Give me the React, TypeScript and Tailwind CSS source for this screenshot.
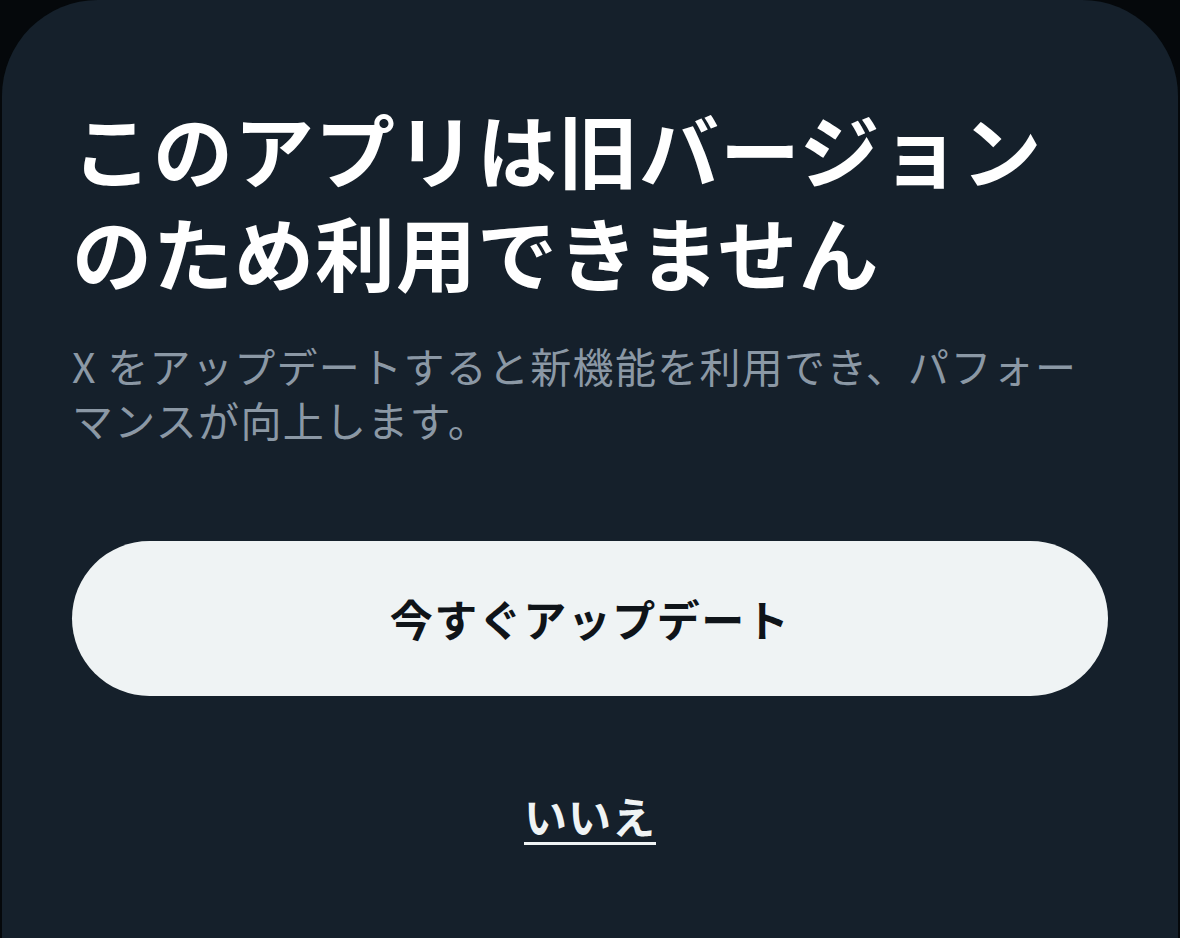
import React from "react";

const jp = { fontFamily: '"Noto Sans CJK JP", "Noto Sans", sans-serif' };

export default function App() {
  return (
    <div className="min-h-screen w-full bg-[#05080b] px-[2px]" style={jp}>
      <div className="flex min-h-[938px] flex-col rounded-t-[96px] bg-[#15202b] px-[70px] pt-[96px]">
        <h1 className="text-[80px] font-bold leading-[103px] tracking-[1px] text-white">
          このアプリは旧バージョン
          <br />
          のため利用できません
        </h1>
        <p className="mt-[36px] text-[41px] leading-[54px] tracking-[1.3px] text-[#8b98a5]">
          X をアップデートすると新機能を利用でき、パフォー
          <br />
          マンスが向上します。
        </p>
        <button className="mt-[95px] flex h-[155px] w-full items-center justify-center rounded-full bg-[#eff3f4] text-[43px] font-bold tracking-[1.5px] text-[#0f1419]">
          今すぐアップデート
        </button>
        <div className="mt-[92px] flex justify-center">
          <span className="text-[43px] font-bold leading-[54px] tracking-[1px] text-[#eff3f4] underline decoration-[3px] underline-offset-[8px]">
            いいえ
          </span>
        </div>
      </div>
    </div>
  );
}
